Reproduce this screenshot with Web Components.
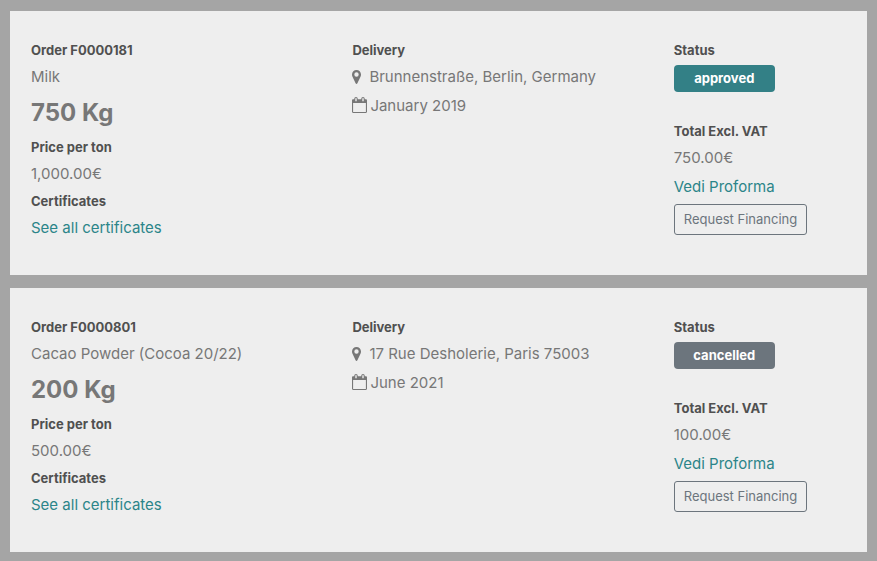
<!DOCTYPE html>
<html lang="en">
<head>
<meta charset="utf-8">
<meta name="viewport" content="width=device-width, initial-scale=1">
<title>Orders</title>
<style>
body { margin: 0; background: #a5a5a5; font-family: Inter, "Liberation Sans", sans-serif; font-size: 15px; color: #777; }
</style>
</head>
<body>
<order-list>
  <order-card number="F0000181" product="Milk" quantity="750 Kg" price="1,000.00€" place="Brunnenstraße, Berlin, Germany" date="January 2019" total="750.00€"><status-badge slot="status" kind="approved">approved</status-badge></order-card>
  <order-card number="F0000801" product="Cacao Powder (Cocoa 20/22)" quantity="200 Kg" price="500.00€" place="17 Rue Desholerie, Paris 75003" date="June 2021" total="100.00€"><status-badge slot="status" kind="cancelled">cancelled</status-badge></order-card>
</order-list>
<script>
class OrderList extends HTMLElement {
  constructor() {
    super();
    this.attachShadow({ mode: 'open' }).innerHTML = `
      <style>:host { display: flex; flex-direction: column; gap: 13px; padding: 11px 10px 9px; }</style>
      <slot></slot>`;
  }
}
class StatusBadge extends HTMLElement {
  constructor() {
    super();
    this.attachShadow({ mode: 'open' }).innerHTML = `
      <style>
        :host { display: block; box-sizing: border-box; width: 101px; border-radius: 4px; background: #6c757d; color: #fff; font-size: 13px; font-weight: 700; line-height: 27px; text-align: center; }
        :host([kind="approved"]) { background: #338086; }
      </style>
      <slot></slot>`;
  }
}
class FieldLabel extends HTMLElement {
  constructor() {
    super();
    this.attachShadow({ mode: 'open' }).innerHTML = `
      <style>:host { display: block; color: #505050; font-size: 13px; font-weight: 700; line-height: 27px; }</style>
      <slot></slot>`;
  }
}
class PinIcon extends HTMLElement {
  constructor() {
    super();
    this.attachShadow({ mode: 'open' }).innerHTML = `
      <style>:host { display: flex; width: 17px; } svg { display: block; }</style>
      <svg width="9" height="14" viewBox="0 0 9 14" aria-hidden="true"><path fill="currentColor" fill-rule="evenodd" d="M4.500 0C2 0 0 2 0 4.500c0 .8.100 1.300.4 1.900l3.200 6.900c.4.800 1.400.8 1.800 0l3.200-6.900c.3-.6.4-1.100.4-1.900C9 2 7 0 4.500 0Zm0 2.300a2.200 2.200 0 1 1 0 4.400 2.200 2.200 0 0 1 0-4.400Z"/></svg>`;
  }
}
class CalendarIcon extends HTMLElement {
  constructor() {
    super();
    this.attachShadow({ mode: 'open' }).innerHTML = `
      <style>:host { display: flex; width: 18px; } svg { display: block; }</style>
      <svg width="15" height="17" viewBox="0 0 15 17" aria-hidden="true"><path fill="currentColor" fill-rule="evenodd" d="M1.200 2.200H2.300V1.800C2.300.8 3 0 4 0s1.700.8 1.700 1.800v.4h3.600v-.4C9.300.8 10 0 11 0s1.700.8 1.700 1.800v.4h1.100c.7 0 1.200.5 1.200 1.200v11.400c0 .7-.5 1.200-1.200 1.200H1.200C.5 16 0 15.500 0 14.800V3.400c0-.7.5-1.200 1.200-1.200ZM1.100 6v8.900h12.800V6ZM4 1c-.5 0-.7.3-.7.800v2.400h1.400V1.800C4.700 1.300 4.500 1 4 1Zm7 0c-.5 0-.7.300-.7.800v2.400h1.400V1.800c0-.5-.2-.8-.7-.8Z"/></svg>`;
  }
}
class OrderCard extends HTMLElement {
  constructor() {
    super();
    const a = name => this.getAttribute(name);
    this.attachShadow({ mode: 'open' }).innerHTML = `
      <style>
        :host { display: grid; grid-template-columns: 3fr 3fr 2fr; background: #eee; padding: 26px 0 33px; }
        section { padding-left: 21px; min-width: 0; }
        .value { padding-bottom: 2px; line-height: 25px; }
        .quantity { margin: 0; font-size: 24px; font-weight: 700; line-height: 43px; }
        .row { display: flex; align-items: center; }
        .date, .proforma { line-height: 29px; }
        .total { padding-top: 26px; }
        ::slotted(status-badge) { margin-top: 1px; }
        a { color: #2b8589; text-decoration: none; }
        button { display: block; box-sizing: border-box; height: 31px; margin: 3px 0 0; padding: 0 9px; border: 1px solid #6c757d; border-radius: 3px; background: transparent; color: #6c757d; font: 13px/21px Inter, "Liberation Sans", sans-serif; white-space: nowrap; }
      </style>
      <section>
        <field-label>Order ${a('number')}</field-label>
        <div class="value">${a('product')}</div>
        <h2 class="quantity">${a('quantity')}</h2>
        <field-label>Price per ton</field-label>
        <div class="value">${a('price')}</div>
        <field-label>Certificates</field-label>
        <div class="value"><a href="#certificates">See all certificates</a></div>
      </section>
      <section>
        <field-label>Delivery</field-label>
        <div class="value row"><pin-icon></pin-icon><span>${a('place')}</span></div>
        <div class="row date"><calendar-icon></calendar-icon><span>${a('date')}</span></div>
      </section>
      <section>
        <field-label>Status</field-label>
        <slot name="status"></slot>
        <div class="total">
          <field-label>Total Excl. VAT</field-label>
          <div class="value">${a('total')}</div>
          <div class="proforma"><a href="#proforma">Vedi Proforma</a></div>
          <button type="button">Request Financing</button>
        </div>
      </section>`;
  }
}
customElements.define('field-label', FieldLabel);
customElements.define('pin-icon', PinIcon);
customElements.define('calendar-icon', CalendarIcon);
customElements.define('status-badge', StatusBadge);
customElements.define('order-card', OrderCard);
customElements.define('order-list', OrderList);
</script>
</body>
</html>
